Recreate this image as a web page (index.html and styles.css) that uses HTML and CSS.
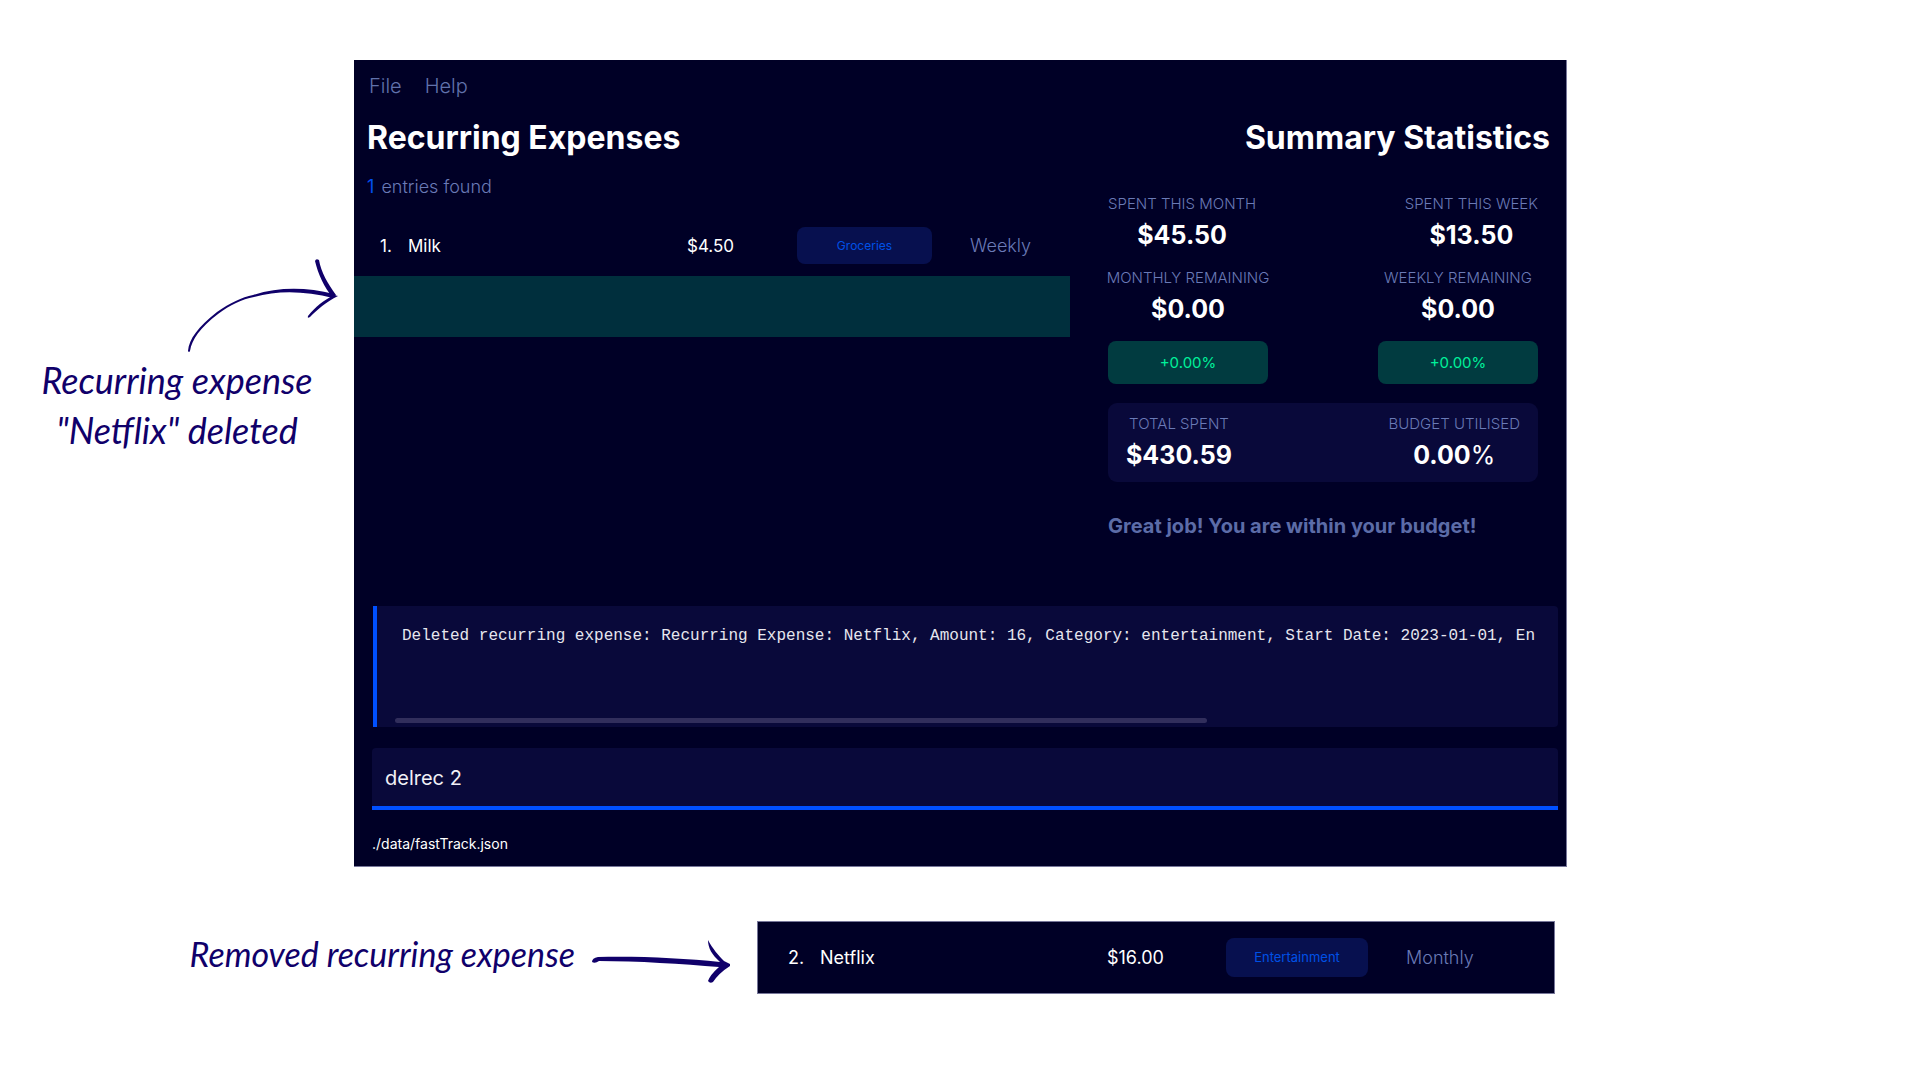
FILE: index.html
```html
<!DOCTYPE html>
<html lang="en">
<head>
<meta charset="utf-8">
<title>FastTrack – Recurring Expenses</title>
<link rel="stylesheet" href="styles.css">
</head>
<body>
<main class="page">
  <section class="stage">
    <aside class="note">
      <svg class="note-arrow" width="156" height="100" viewBox="0 0 156 100" aria-hidden="true">
        <path class="ink" d="M4 96 Q5 98 6 96 C8 84 16 73 34 59 C46 50 58 44 70 42 C94 35 122 36 149 43 L150 39 C122 32 94 32 69 40 C58 42 46 48 33 57 C14 72 5 84 4 96 Z"/>
        <path class="ink" d="M131 6 Q132 3 135 5 C137 17 144 29 152 40 L149 43 C140 32 134 19 131 6 Z"/>
        <path class="ink" d="M154 41 C142 47 134 54 126 62 Q123 64 124 61 C131 52 140 45 150 40 Z"/>
      </svg>
      <p class="hand">Recurring expense<br>"Netflix" deleted</p>
    </aside>

    <section class="window">
      <nav class="menu">
        <button type="button">File</button>
        <button type="button">Help</button>
      </nav>
      <header class="titles">
        <h1>Recurring Expenses</h1>
        <h2>Summary Statistics</h2>
      </header>
      <div class="panels">
        <section class="expenses">
          <p class="count"><span class="count-number">1</span> entries found</p>
          <ul class="list">
            <li class="expense">
              <span>1.</span>
              <span>Milk</span>
              <span>$4.50</span>
              <span class="tag">Groceries</span>
              <span class="frequency">Weekly</span>
            </li>
            <li class="deleted"></li>
          </ul>
        </section>
        <section class="stats">
          <div class="stat-row">
            <div class="stat"><span class="label">SPENT THIS MONTH</span><strong class="value">$45.50</strong></div>
            <div class="stat"><span class="label">SPENT THIS WEEK</span><strong class="value">$13.50</strong></div>
          </div>
          <div class="stat-row">
            <div class="stat wide"><span class="label">MONTHLY REMAINING</span><strong class="value">$0.00</strong><span class="change">+0.00%</span></div>
            <div class="stat wide"><span class="label">WEEKLY REMAINING</span><strong class="value">$0.00</strong><span class="change">+0.00%</span></div>
          </div>
          <div class="stat-row total">
            <div class="stat"><span class="label">TOTAL SPENT</span><strong class="value">$430.59</strong></div>
            <div class="stat"><span class="label">BUDGET UTILISED</span><strong class="value">0.00<span class="percent">%</span></strong></div>
          </div>
          <p class="verdict">Great job! You are within your budget!</p>
        </section>
      </div>
      <section class="console">
        <pre class="output">Deleted recurring expense: Recurring Expense: Netflix, Amount: 16, Category: entertainment, Start Date: 2023-01-01, En</pre>
        <div class="scroll-thumb"></div>
      </section>
      <input class="command" type="text" value="delrec 2" aria-label="Command">
      <footer class="path">./data/fastTrack.json</footer>
    </section>
  </section>

  <section class="removed">
    <div class="removed-note">
      <p class="hand">Removed recurring expense</p>
      <svg class="removed-arrow" width="140" height="50" viewBox="0 0 140 50" aria-hidden="true">
        <path class="ink" d="M1 22 Q1 18 7 17 C46 16 92 18 129 22 C121 15 117 8 117 0 C121 8 128 16 133 21 L139 24 L139 26 Q128 33 122 42 Q119 44 117 41 Q119 35 128 27 C92 24 46 21 8 21 Q4 24 1 22 Z"/>
      </svg>
    </div>
    <div class="expense expense-large">
      <span>2.</span>
      <span>Netflix</span>
      <span>$16.00</span>
      <span class="tag">Entertainment</span>
      <span class="frequency">Monthly</span>
    </div>
  </section>
</main>
</body>
</html>
```
FILE: styles.css
```css
* { box-sizing: border-box; }

body {
  margin: 0;
  background: #fff;
  color: #fff;
  font-family: Inter, "Liberation Sans", sans-serif;
}

h1, h2, p, ul, pre { margin: 0; padding: 0; }

.page { padding: 60px 0; }

.stage {
  display: grid;
  grid-template-columns: 354px minmax(0, 1fr) 353px;
}

/* Handwritten notes */
.note { padding-top: 195px; }

.note-arrow {
  display: block;
  margin: 0 14px 0 auto;
}

.ink { fill: #10006a; }

.hand {
  color: #10006a;
  font: italic 36px/50px Lato, sans-serif;
  text-align: center;
}

/* Application window */
.window {
  padding: 12px 8px 0 0;
  background: #000026;
  border-right: 1px solid #77779a;
  border-bottom: 1px solid #77779a;
}

.menu {
  display: flex;
  gap: 23px;
  padding-left: 15px;
}

.menu button {
  padding: 0;
  border: 0;
  background: none;
  color: #6172ac;
  font: 300 20px/28px Inter, sans-serif;
}

.titles {
  display: flex;
  justify-content: space-between;
  padding: 18px 8px 0 13px;
}

h1, h2 { font-size: 32px; line-height: 40px; }

.panels {
  display: grid;
  grid-template-columns: 716px minmax(0, 430px);
  justify-content: space-between;
  padding: 16px 20px 0 0;
}

.count {
  padding: 1px 0 16px 13px;
  color: #6a7ab6;
  font-size: 18px;
  font-weight: 300;
  line-height: 24px;
}

.count-number {
  margin-right: 2px;
  color: #0050f0;
  font-weight: 400;
}

.list { list-style: none; }

.expense {
  display: grid;
  grid-template-columns: 28px 279px 110px 135px 1fr;
  align-items: center;
  height: 61px;
  padding-left: 26px;
  font-size: 17px;
}

.tag {
  border-radius: 8px;
  background: #07104f;
  color: #0050e6;
  font-size: 13px;
  line-height: 37px;
  text-align: center;
}

.list .tag { font-size: 12px; }

.frequency {
  padding-left: 38px;
  color: #6a7ab6;
  font-size: 18px;
  font-weight: 300;
}

.deleted {
  height: 61px;
  background: #002f3d;
}

/* Statistics */
.stats { padding-top: 18px; }

.stat-row {
  display: flex;
  justify-content: space-between;
  margin-bottom: 12px;
}

.stat {
  display: flex;
  flex-direction: column;
  align-items: center;
}

.wide { width: 160px; }

.label {
  color: #6a7ab6;
  font-size: 15px;
  font-weight: 300;
  line-height: 24px;
  white-space: nowrap;
}

.value { font-size: 25px; line-height: 38px; }

.percent { font-weight: 400; }

.change {
  align-self: stretch;
  margin: 13px 0 7px;
  border-radius: 8px;
  background: #013b40;
  color: #00f09a;
  font-size: 15px;
  line-height: 43px;
  text-align: center;
}

.total {
  margin: 0;
  padding: 9px 18px 8px;
  border-radius: 9px;
  background: #09093a;
}

.verdict {
  padding-top: 30px;
  color: #5c6ca8;
  font-size: 20px;
  font-weight: 700;
  line-height: 28px;
}

/* Command area */
.console {
  margin: 66px 0 0 19px;
  padding: 18px 20px 4px 18px;
  border-left: 4px solid #0050ff;
  border-radius: 0 4px 4px 0;
  background: #09093a;
}

.output {
  height: 94px;
  margin-left: 7px;
  overflow: hidden;
  color: #e6e6ee;
  font: 16px/24px "Liberation Mono", monospace;
}

.scroll-thumb {
  width: 71%;
  height: 5px;
  border-radius: 3px;
  background: #312e5c;
}

.command {
  display: block;
  width: calc(100% - 18px);
  height: 62px;
  margin: 21px 0 0 18px;
  padding: 2px 13px 0;
  border: 0;
  border-bottom: 4px solid #0050ff;
  border-radius: 4px 4px 0 0;
  background: #09093a;
  color: #f0f0f6;
  font: 20px Inter, sans-serif;
}

.path {
  padding: 21px 0 10px 18px;
  font-size: 14px;
  line-height: 25px;
}

/* Removed entry */
.removed {
  display: grid;
  grid-template-columns: 757px minmax(0, 1fr) 365px;
  align-items: center;
  padding-top: 54px;
}

.removed-note {
  display: flex;
  align-items: center;
  justify-content: flex-end;
  gap: 16px;
  padding-right: 26px;
}

.removed-note .hand {
  padding-bottom: 8px;
  font-size: 34px;
}

.removed-arrow { margin-top: 14px; }

.expense-large {
  grid-template-columns: 32px 287px 119px 142px 1fr;
  height: 73px;
  padding-left: 30px;
  border: 1px solid #77779a;
  background: #000026;
  font-size: 18px;
}

.expense-large .tag { line-height: 39px; }
```
